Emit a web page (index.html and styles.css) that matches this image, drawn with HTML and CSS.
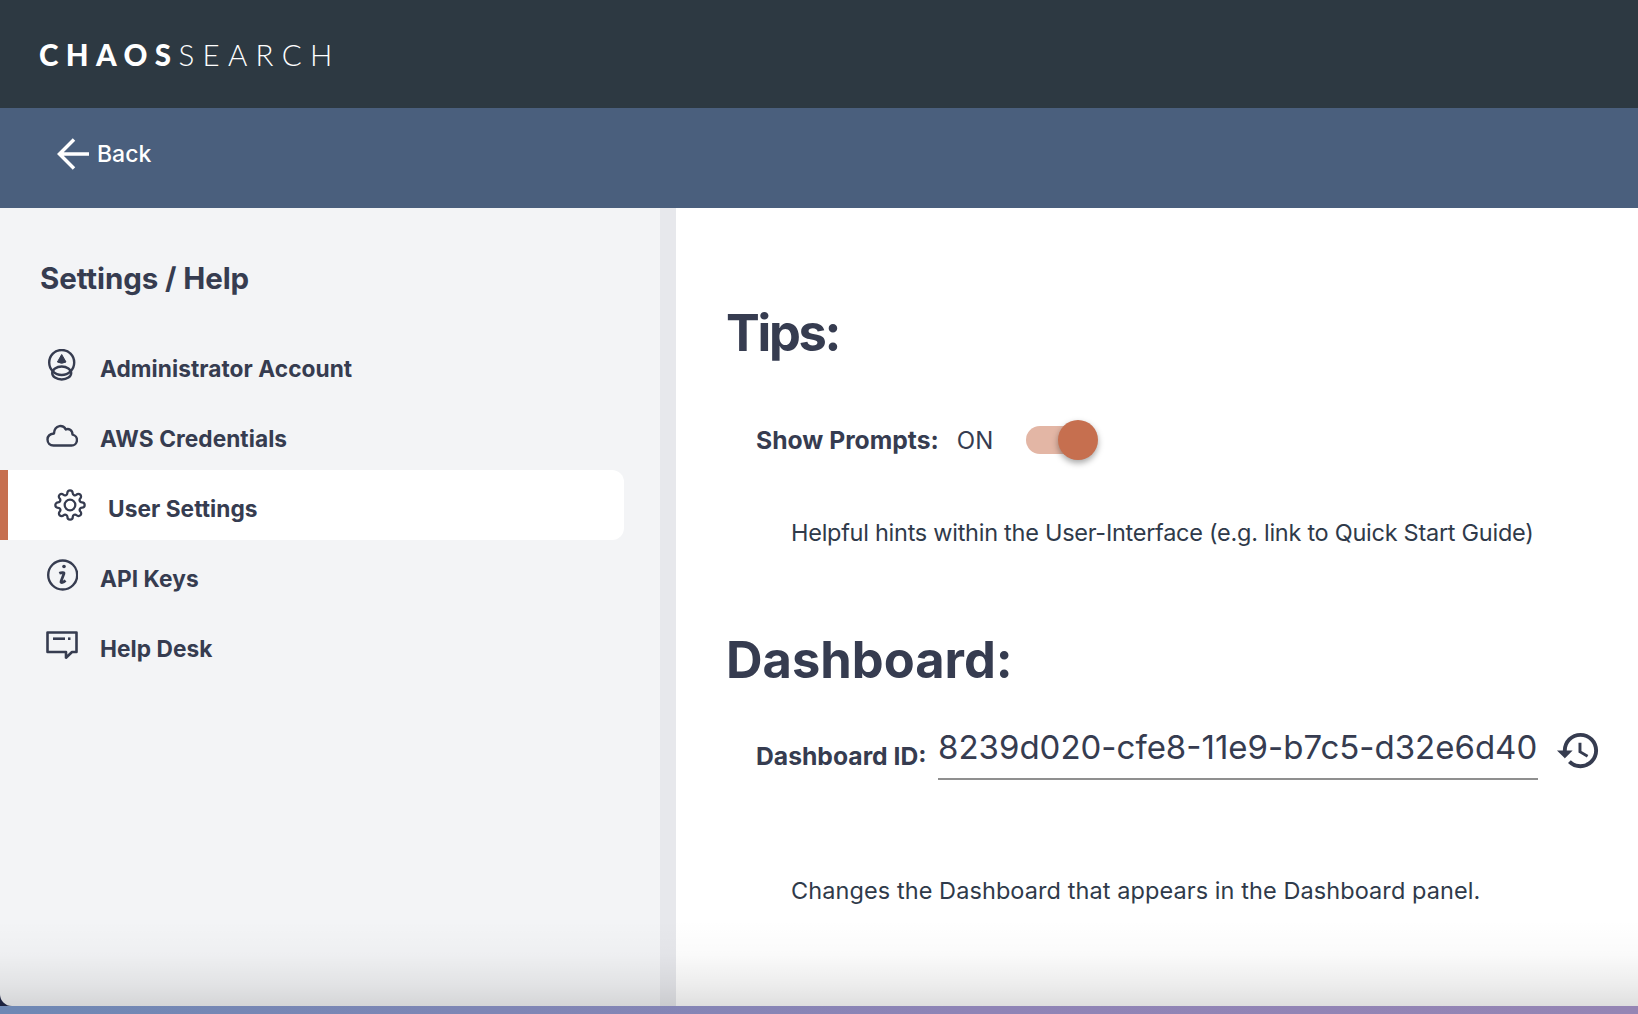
FILE: index.html
```html
<!DOCTYPE html>
<html lang="en">
<head>
<meta charset="utf-8">
<title>Settings / Help</title>
<link rel="stylesheet" href="styles.css">
</head>
<body>
<div class="app">
  <header class="topbar">
    <div class="logo"><span class="logo-strong">CHAOS</span><span class="logo-light">SEARCH</span></div>
  </header>
  <div class="subbar">
    <a class="back">
      <svg class="back-icon" viewBox="0 0 32 32" fill="none" stroke="currentColor" stroke-width="3.500"><path d="M32 16H3M17 1.500 2.500 16 17 30.500"/></svg>
      <span>Back</span>
    </a>
  </div>
  <main class="main">
    <aside class="sidebar">
      <h2 class="side-title">Settings / Help</h2>
      <nav class="side-list">
        <a class="side-item">
          <svg class="side-icon" viewBox="0 0 32 32" fill="none" stroke="currentColor" stroke-width="2.400"><circle cx="15.700" cy="13.500" r="12.500"/><ellipse cx="15.700" cy="24" rx="9.500" ry="6.500"/><path d="M15.700 5.500 20 13Q15.700 15.500 11.400 13Z" fill="currentColor" stroke-width="1"/></svg>
          <span class="side-label">Administrator Account</span>
        </a>
        <a class="side-item">
          <svg class="side-icon" viewBox="0 0 32 32" fill="none" stroke="currentColor" stroke-width="2.400"><path d="M7.500 26.500H25.500a5.500 5.500 0 0 0 1-10.900C26.500 11 22.500 9 19.800 10.500C18 5.500 8.500 5 8 14.500C4 15 1.500 17.500 1.500 20.500C1.500 24 4 26.500 7.500 26.500Z" stroke-linejoin="round"/></svg>
          <span class="side-label">AWS Credentials</span>
        </a>
        <a class="side-item is-active">
          <svg class="side-icon" viewBox="0 0 24 24" fill="none" stroke="currentColor" stroke-width="1.700" stroke-linejoin="round"><circle cx="12" cy="12" r="4"/><path d="M19.400 15a1.650 1.650 0 0 0 .33 1.820l.06.06a2 2 0 0 1 0 2.830 2 2 0 0 1-2.830 0l-.06-.06a1.650 1.650 0 0 0-1.820-.33 1.650 1.650 0 0 0-1 1.510V21a2 2 0 0 1-2 2 2 2 0 0 1-2-2v-.09A1.650 1.650 0 0 0 9 19.400a1.650 1.650 0 0 0-1.820.33l-.06.06a2 2 0 0 1-2.830 0 2 2 0 0 1 0-2.830l.06-.06a1.650 1.650 0 0 0 .33-1.820 1.650 1.650 0 0 0-1.510-1H3a2 2 0 0 1-2-2 2 2 0 0 1 2-2h.09A1.650 1.650 0 0 0 4.600 9a1.650 1.650 0 0 0-.33-1.820l-.06-.06a2 2 0 0 1 0-2.830 2 2 0 0 1 2.830 0l.06.06a1.650 1.650 0 0 0 1.820.33H9a1.650 1.650 0 0 0 1-1.510V3a2 2 0 0 1 2-2 2 2 0 0 1 2 2v.09a1.650 1.650 0 0 0 1 1.510 1.650 1.650 0 0 0 1.820-.33l.06-.06a2 2 0 0 1 2.830 0 2 2 0 0 1 0 2.830l-.06.06a1.650 1.650 0 0 0-.33 1.820V9a1.650 1.650 0 0 0 1.510 1H21a2 2 0 0 1 2 2 2 2 0 0 1-2 2h-.09a1.650 1.650 0 0 0-1.510 1z"/></svg>
          <span class="side-label">User Settings</span>
        </a>
        <a class="side-item">
          <svg class="side-icon" viewBox="0 0 32 32" fill="none" stroke="currentColor" stroke-width="2.400"><circle cx="16.700" cy="16" r="14.500"/><circle cx="18" cy="7.500" r="1.800" fill="currentColor" stroke="none"/><path d="M13.300 14.300C15 13.500 18.500 13 18 14.500L15 22.500C14.500 24.500 17.500 23.500 19.500 21.500" stroke-width="2.700"/></svg>
          <span class="side-label">API Keys</span>
        </a>
        <a class="side-item">
          <svg class="side-icon" viewBox="0 0 32 32" fill="none" stroke="currentColor" stroke-width="2.600"><path d="M1.500 3.500H30.500V23H26L20 28.700V23H1.500Z" stroke-linejoin="round"/><path d="M7 9.700H19"/><path d="M22 9.700H24.500"/></svg>
          <span class="side-label">Help Desk</span>
        </a>
      </nav>
    </aside>
    <div class="scrolltrack"></div>
    <section class="content">
      <h1 class="heading heading-tips">Tips:</h1>
      <div class="prompt-row">
        <span class="field-label">Show Prompts:</span>
        <span class="state">ON</span>
        <span class="toggle"><span class="toggle-knob"></span></span>
      </div>
      <p class="hint hint-tips">Helpful hints within the User-Interface (e.g. link to Quick Start Guide)</p>
      <h1 class="heading heading-dash">Dashboard:</h1>
      <div class="dash-row">
        <label class="field-label dash-label" for="dash">Dashboard ID:</label>
        <input class="dash-input" id="dash" type="text" value="8239d020-cfe8-11e9-b7c5-d32e6d40ab16">
        <svg class="history-icon" viewBox="0 0 24 24" fill="currentColor"><path d="M13 3a9 9 0 0 0-9 9H1l3.890 3.890.07.14L9 12H6c0-3.870 3.130-7 7-7s7 3.130 7 7-3.130 7-7 7c-1.930 0-3.680-.79-4.940-2.060l-1.420 1.420A8.954 8.954 0 0 0 13 21a9 9 0 0 0 0-18zm-1 5v5l4.280 2.540.72-1.210-3.500-2.080V8H12z"/></svg>
      </div>
      <p class="hint hint-dash">Changes the Dashboard that appears in the Dashboard panel.</p>
    </section>
    <div class="fade"></div>
  </main>
  <div class="bottombar"></div>
</div>
</body>
</html>
```

FILE: styles.css
```css
* { box-sizing: border-box; }
html, body { margin: 0; height: 100%; }
body {
  font-family: Inter, "Noto Sans", "Liberation Sans", sans-serif;
  color: #363c50;
  background: #1d2340;
  overflow: hidden;
}
.app { height: 1014px; display: flex; flex-direction: column; }

.topbar {
  flex: 0 0 108px;
  background: #2d3942;
  display: flex;
  align-items: center;
  padding: 2px 0 0 39px;
}
.logo { font-family: Lato, sans-serif; font-size: 29.500px; line-height: 1; color: #fff; letter-spacing: 7.400px; white-space: nowrap; }
.logo-strong { font-weight: 900; }
.logo-light { font-weight: 300; letter-spacing: 8.300px; }

.subbar {
  flex: 0 0 100px;
  background: #4a5f7d;
  display: flex;
  align-items: center;
  padding: 0 0 8px 57px;
  color: #fff;
}
.back { display: flex; align-items: center; gap: 8px; font-size: 23px; font-weight: 500; }
.back-icon { width: 32px; height: 32px; }

.main { flex: 1; min-height: 0; display: flex; position: relative; border-bottom-left-radius: 12px; overflow: hidden; }
.sidebar { flex: 0 0 660px; background: #f3f4f6; padding: 50px 36px 0 0; }
.side-title { margin: 0 0 32px 40px; font-size: 29.500px; line-height: 40px; font-weight: 700; letter-spacing: -.1px; color: #363c50; }
.side-list { display: flex; flex-direction: column; }
.side-item { height: 70px; display: flex; align-items: center; gap: 22px; padding-left: 46px; font-size: 22.700px; font-weight: 700; letter-spacing: .05px; }
.side-item.is-active { background: #fff; border-left: 8px solid #c66f4f; border-radius: 0 12px 12px 0; }
.side-icon { flex: none; width: 32px; height: 32px; }
.side-label { padding-top: 7px; }

.scrolltrack { flex: 0 0 16px; background: #e7e8ec; }

.content { flex: 1; background: #fff; padding: 95px 0 0 50px; min-width: 0; }
.heading { margin: 0; font-size: 50.600px; line-height: 60px; font-weight: 700; color: #363c50; }
.heading-tips { letter-spacing: -2.300px; }
.heading-dash { margin-top: 81px; }

.prompt-row { margin: 53px 0 0 30px; height: 48px; display: flex; align-items: center; }
.field-label { font-size: 24.700px; font-weight: 700; line-height: 32px; white-space: nowrap; }
.state { margin-left: 18px; font-size: 24px; font-weight: 400; color: #363c50; }
.toggle { margin-left: 33px; width: 52px; height: 28px; border-radius: 14px; background: #e3b6a5; position: relative; }
.toggle-knob {
  position: absolute; top: -6px; right: -20px;
  width: 40px; height: 40px; border-radius: 50%;
  background: #c66f4f;
  box-shadow: 0 3px 6px rgba(0, 0, 0, .35);
}

.hint { margin: 0 0 0 65px; font-size: 23.500px; line-height: 32px; color: #2f3a4a; white-space: nowrap; }
.hint-tips { margin-top: 53px; letter-spacing: -.27px; }
.hint-dash { margin-top: 95px; letter-spacing: .08px; }

.dash-row { margin: 34px 0 0 30px; display: flex; align-items: flex-start; }
.dash-label { flex: 0 0 182px; margin-top: 16px; }
.dash-input {
  flex: 0 0 600px;
  height: 56px;
  padding: 0 0 8px;
  border: 0;
  border-bottom: 2px solid #8f8f8f;
  outline: 0;
  background: transparent;
  font: 400 33px Inter, sans-serif;
  color: #363c50;
}
.history-icon { flex: none; width: 47px; height: 47px; margin: 3px 0 0 17px; }

.fade { position: absolute; left: 0; right: 0; bottom: 0; height: 86px; background: linear-gradient(to bottom, rgba(0,0,0,0), rgba(0,0,0,.02) 40%, rgba(0,0,0,.07) 75%, rgba(0,0,0,.125)); pointer-events: none; }

.bottombar { flex: 0 0 8px; background: linear-gradient(to right, #6e88b4, #8f84b6 60%, #9585b4); }
```
